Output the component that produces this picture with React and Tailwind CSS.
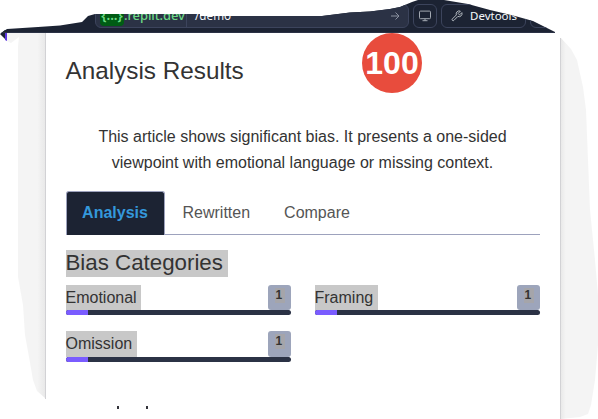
import React from "react";

function Backdrop() {
  return (
    <svg className="pointer-events-none absolute inset-0" width="598" height="419" viewBox="0 0 598 419">
      <defs>
        <linearGradient id="edgeL" x1="0" x2="1">
          <stop offset="0" stopColor="#f4f4f4" />
          <stop offset="0.8" stopColor="#f4f4f4" />
          <stop offset="1" stopColor="#e9e9e9" />
        </linearGradient>
        <linearGradient id="edgeR" x1="0" x2="1">
          <stop offset="0" stopColor="#e9e9e9" />
          <stop offset="0.13" stopColor="#f4f4f4" />
          <stop offset="1" stopColor="#f4f4f4" />
        </linearGradient>
      </defs>
      <path d="M7 33H45V398L37 391L33 380L29 357L25 335L23 305L18 277V46L19 37L11 43L7 41Z" fill="url(#edgeL)" />
      <path d="M561 38L571 49L577 60L583 87L586 110L590 210L595 260L598 295V345L595 380L591 405L588 414L580 417L561 419Z" fill="url(#edgeR)" />
      <path d="M45.5 33V399M560.5 38V419" stroke="#d2d2d5" />
      <path d="M0 34L5 30V39Z" fill="#1c2333" />
      <path d="M5 30H7V41L5 40Z" fill="#5b35e0" />
    </svg>
  );
}

function Toolbar() {
  return (
    <header className="flex h-[33px] items-start border-b border-[#2b3245] bg-[#1c2333] pt-1 pl-[95px] [clip-path:polygon(0px_34px,4px_31px,7px_29px,38px_27px,60px_25.5px,82px_22px,88px_16px,95px_14px,200px_14px,200px_16px,322px_16px,350px_12.5px,370px_11.5px,390px_9px,400px_7px,412px_2px,418px_0px,444px_0px,468px_4px,490px_10px,515px_16px,533px_21px,547px_28px,555px_32px,555px_33px,0px_33px)]">
      <div className="flex h-6 w-[314px] shrink-0 items-center rounded-md border border-[#3c445c] bg-[#2b3245] pl-1 font-['Noto_Sans']">
        <span className="flex h-[19px] w-6 shrink-0 items-center justify-center rounded bg-[#005c14] pb-px text-[13.5px] font-semibold text-[#6cd985]">{"{...}"}</span>
        <span className="w-[62px] shrink-0 pb-px text-[13px] font-medium whitespace-nowrap text-[#6cd985]"><span className="tracking-[-0.1px]">.replit.dev</span></span>
        <span className="h-6 w-px shrink-0 bg-[#3c445c]" />
        <span className="pb-px pl-2 text-[11.7px] text-[#f5f9fc]">/demo</span>
        <svg className="mr-2 ml-auto" width="10" height="10" viewBox="0 0 10 10" fill="none" stroke="#8b91a0">
          <path d="M1 5H9M5.5 1.5L9 5L5.5 8.5" />
        </svg>
      </div>
      <div className="ml-1 flex h-6 w-6 shrink-0 items-center justify-center rounded-md border border-[#3c445c]">
        <svg width="12" height="12" viewBox="0 0 12 12" fill="none" stroke="#a4aab3">
          <rect x="0.5" y="1.1" width="11" height="7.6" rx="1" />
          <path d="M6 8.7V10.7M3.5 10.7H8.5" />
        </svg>
      </div>
      <div className="ml-1 flex h-6 w-[85px] shrink-0 items-center rounded-md border border-[#3c445c] pl-[9px]">
        <svg width="12" height="12" viewBox="0 0 24 24" fill="none" stroke="#b4bac1" strokeWidth="2" strokeLinejoin="round">
          <path d="M14.7 6.3a1 1 0 0 0 0 1.4l1.6 1.6a1 1 0 0 0 1.4 0l4-4a6 6 0 0 1-8 7.6l-7.9 7.9a2.1 2.1 0 0 1-3-3l7.9-7.9a6 6 0 0 1 8-7.6z" />
        </svg>
        <span className="ml-[7px] font-['Noto_Sans'] text-[11.5px] text-[#f5f9fc]">Devtools</span>
      </div>
      <div className="ml-1 h-6 w-14 shrink-0 rounded-md border border-[#3c445c]" />
    </header>
  );
}

function Category({ name, mark, row = "h-[25px]" }) {
  return (
    <div>
      <div className={`${row} flex items-stretch justify-between`}>
        <span className={`${mark} h-[26px] bg-[#c8c8c8] leading-[25px]`}>
          <span className="-ml-[0.5px]">{name}</span>
        </span>
        <span className="flex w-[23px] justify-center rounded-[3px] bg-[#9da5bb] pt-[3px] text-[12px] font-bold">
          <span className="h-[15px] w-[10px] bg-[#a5a5aa] pl-px leading-[15px]">1</span>
        </span>
      </div>
      <div className="relative h-[5px] overflow-hidden rounded-[3px] bg-[#2b3245]">
        <div className="h-full w-[22px] bg-[#7a5cff]" />
      </div>
    </div>
  );
}

export default function App() {
  return (
    <div className="relative h-[419px] w-[598px] overflow-hidden bg-white font-['Liberation_Sans',sans-serif] text-[16px] text-[#333]">
      <Backdrop />
      <Toolbar />
      <main className="relative ml-[66px] w-[474px]">
        <div className="flex h-[60px] items-start justify-between">
          <h1 className="-ml-[0.5px] pt-[24px] text-[24.3px] leading-[28px]">Analysis Results</h1>
          <div className="mr-[118px] flex h-[60px] w-[60px] items-center justify-center rounded-full bg-[#e84c3d] text-[32px] font-bold text-white">100</div>
        </div>
        <p className="mt-[31px] -ml-px text-center leading-[26px]">
          This article shows significant bias. It presents a one-sided<br />
          viewpoint with emotional language or missing context.
        </p>
        <nav className="mt-[15px] flex h-11 border-b border-[#9da2bd] text-[#555]">
          <div className="flex h-11 w-[99px] items-center justify-center rounded-t-[3px] border border-b-0 border-[#9da2bd] bg-[#1c2333] pr-px pb-px font-bold text-[#3498db]">Analysis</div>
          <div className="flex items-center pt-px pl-[17.5px]">Rewritten</div>
          <div className="flex items-center pt-px pl-[34px]">Compare</div>
        </nav>
        <h2 className="mt-[15px] h-[27px] w-[162px] bg-[#c8c8c8] text-[22.3px] leading-[26px] whitespace-nowrap"><span className="-ml-[0.5px]">Bias Categories</span></h2>
        <div className="mt-2 grid grid-cols-2 gap-x-6 gap-y-4">
          <Category name="Emotional" mark="w-[75px]" />
          <Category name="Framing" mark="w-[63px]" />
          <Category name="Omission" mark="w-[71px]" row="h-[26px]" />
        </div>
        <div className="mt-[44px] ml-[51px] flex items-end gap-[27px]">
          <span className="h-[3px] w-[2px] bg-[#33333b]" />
          <span className="h-[3px] w-[2px] bg-[#33333b]" />
        </div>
      </main>
    </div>
  );
}
